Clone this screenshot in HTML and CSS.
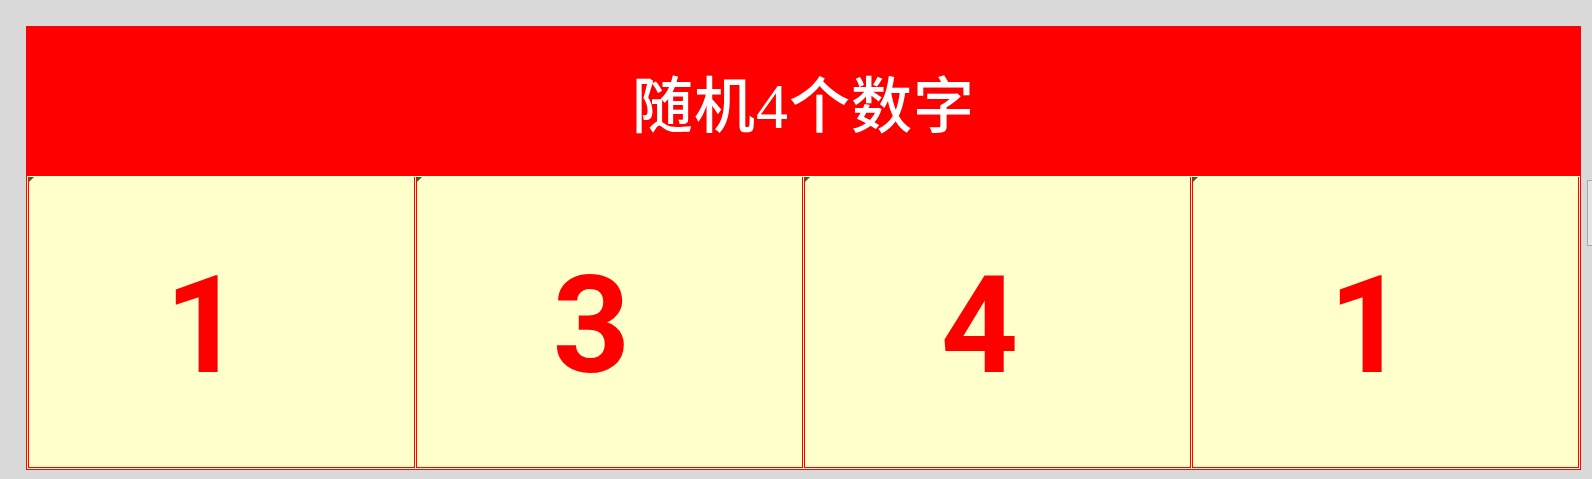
FILE: index.html
```html
<!DOCTYPE html>
<html lang="zh-CN">
<head>
<meta charset="utf-8">
<title>随机4个数字</title>
<link rel="stylesheet" href="styles.css">
</head>
<body>
<div class="layout">
  <div class="sheet">
    <div class="header">随机<span class="latin">4</span>个数字</div>
    <div class="cells">
      <div class="cell">1</div>
      <div class="cell">3</div>
      <div class="cell">4</div>
      <div class="cell">1</div>
    </div>
  </div>
  <div class="side"><div class="side-box"></div></div>
</div>
</body>
</html>
```

FILE: styles.css
```css
html, body {
  margin: 0;
  padding: 0;
  background: #d9d9d9;
  height: 100%;
}
.layout {
  display: flex;
  padding: 26px 0 0 26px;
}
.sheet {
  width: 1555px;
  flex: none;
}
.header {
  height: 150px;
  background: #ff0000;
  color: #ffffff;
  font-family: "Noto Sans CJK SC", sans-serif;
  font-weight: 500;
  font-size: 61px;
  line-height: 150px;
  text-align: center;
  box-sizing: border-box;
  padding-top: 1px;
  letter-spacing: 1px;
}
.latin {
  font-family: "Liberation Serif", "Times New Roman", serif;
  font-weight: normal;
  font-size: 64px;
}
.cells {
  display: grid;
  grid-template-columns: repeat(4, 1fr);
  gap: 1px;
  padding: 1px;
  border: 1px solid #ff0000;
  border-top: 0;
  height: 294px;
  box-sizing: border-box;
  background: #ffffcc;
}
.cell {
  position: relative;
  border: 1px solid #ff0000;
  border-top: 0;
  background: #ffffcc;
  color: #ff0000;
  font-family: Roboto, "Liberation Sans", Arial, sans-serif;
  font-weight: 700;
  font-size: 135px;
  display: flex;
  align-items: center;
  justify-content: center;
  padding-right: 36px;
  padding-top: 8px;
}
.cell::before {
  content: "";
  position: absolute;
  left: 0;
  top: 0;
  width: 0;
  height: 0;
  border-top: 5px solid #2e6b2e;
  border-right: 5px solid transparent;
}
.side {
  flex: 1;
  padding: 154px 0 0 6px;
}
.side-box {
  height: 64px;
  border: 1px solid #a8a8a8;
  border-right: 0;
  background: #e4e4e4;
}
```
